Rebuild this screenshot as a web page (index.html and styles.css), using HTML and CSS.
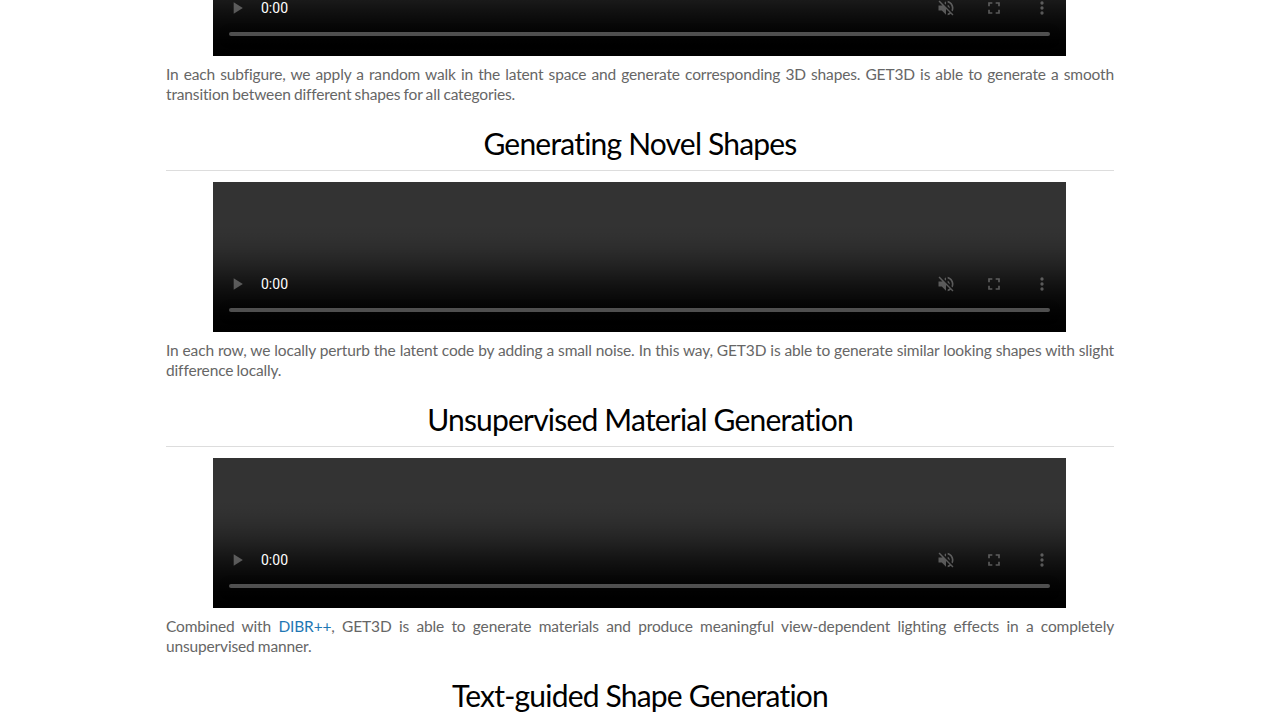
FILE: index.html
```html
<!DOCTYPE html>
<html lang="en">
<head>
    <meta charset="UTF-8">
    <meta name="viewport" content="width=device-width, initial-scale=1.0">
    <title>GET3D</title>
    <link rel="stylesheet" href="styles.css">
</head>
<body>
    <main class="content">
        <section class="block block-first">
            <video class="demo" controls muted></video>
            <p>In each subfigure, we apply a random walk in the latent space and generate corresponding 3D shapes. GET3D is able to generate a smooth transition between different shapes for all categories.</p>
        </section>

        <section class="block">
            <h2>Generating Novel Shapes</h2>
            <video class="demo" controls muted></video>
            <p>In each row, we locally perturb the latent code by adding a small noise. In this way, GET3D is able to generate similar looking shapes with slight difference locally.</p>
        </section>

        <section class="block">
            <h2>Unsupervised Material Generation</h2>
            <video class="demo" controls muted></video>
            <p>Combined with <a href="#">DIBR++</a>, GET3D is able to generate materials and produce meaningful view-dependent lighting effects in a completely unsupervised manner.</p>
        </section>

        <section class="block">
            <h2>Text-guided Shape Generation</h2>
        </section>
    </main>
</body>
</html>
```

FILE: styles.css
```css
html, body {
    height: 100%;
    overflow: hidden;
}

body {
    font-family: 'Lato', 'Open Sans', sans-serif;
    margin: 0;
    padding: 0;
    background: #fff;
    color: #666;
}

.content {
    width: 948px;
    margin: 0 auto;
}

.block-first {
    margin-top: -94px;
}

.block h2 {
    margin: 19px 0 11px;
    padding-bottom: 7px;
    border-bottom: 1px solid #ddd;
    font-size: 30px;
    font-weight: 400;
    line-height: 40px;
    letter-spacing: -0.8px;
    color: #000;
    text-align: center;
}

.demo {
    display: block;
    width: 853px;
    height: 150px;
    margin: 0 0 0 47px;
    background: #000;
}

.block p {
    margin: 8px 0 0;
    font-size: 15.5px;
    line-height: 20px;
    letter-spacing: -0.15px;
    word-spacing: -0.6px;
    text-align: justify;
}

.block a {
    color: #1f77b4;
    text-decoration: none;
}
```
